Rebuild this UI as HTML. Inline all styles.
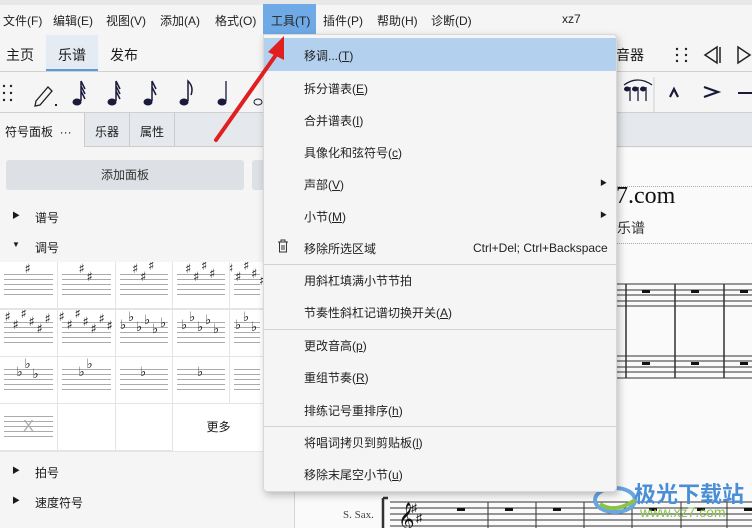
<!DOCTYPE html>
<html><head><meta charset="utf-8"><style>
*{margin:0;padding:0;box-sizing:border-box}
body{width:752px;height:528px;overflow:hidden;background:#f5f5f5;font-family:"Liberation Sans","Noto Sans CJK SC",sans-serif;font-size:12px;color:#1a1a1a;position:relative}
.a{position:absolute;white-space:nowrap}
.mb span{position:absolute;top:12px;font-size:12px;color:#222}
.menu{position:absolute;left:263px;top:34px;width:354px;height:458px;background:#f5f5f5;border:1px solid #d8d8d8;border-radius:0 4px 4px 4px;box-shadow:2px 3px 8px rgba(0,0,0,.25)}
.mi{position:absolute;left:40px;font-size:12px;color:#222}
.sep{position:absolute;left:0;right:0;height:1px;background:#cfd3d8}
u{text-decoration:underline}
.cell{position:absolute;background:#fff}
.stl{position:absolute;left:4px;right:4px;height:1px;background:#aaa}
</style></head><body>
<div class="a" style="left:0;top:0;width:752px;height:5px;background:#e8e8e8"></div>
<div class="mb">
<span style="left:3px">文件(F)</span><span style="left:53px">编辑(E)</span><span style="left:106px">视图(V)</span><span style="left:160px">添加(A)</span><span style="left:215px">格式(O)</span>
<div class="a" style="left:263px;top:4px;width:53px;height:30px;background:#70aae6"></div>
<span style="left:271px">工具(T)</span><span style="left:323px">插件(P)</span><span style="left:377px">帮助(H)</span><span style="left:431px">诊断(D)</span><span style="left:562px">xz7</span>
</div>
<div class="a" style="left:46px;top:35px;width:52px;height:36px;background:#e4ebf3"></div>
<div class="a" style="left:46px;top:69px;width:52px;height:2px;background:#5a9be0"></div>
<div class="a" style="left:6px;top:45px;font-size:14px">主页</div>
<div class="a" style="left:58px;top:45px;font-size:14px">乐谱</div>
<div class="a" style="left:110px;top:45px;font-size:14px">发布</div>
<div class="a" style="left:616px;top:45px;font-size:14px">音器</div>
<div class="a" style="left:0;top:71px;width:752px;height:1px;background:#d0d0d0"></div>
<div class="a" style="left:0;top:112px;width:752px;height:1px;background:#d0d0d0"></div>
<svg class="a" style="left:0;top:35px" width="752" height="80">
<g fill="#222"><circle cx="677" cy="14" r="1.2"/><circle cx="686" cy="14" r="1.2"/><circle cx="677" cy="20" r="1.2"/><circle cx="686" cy="20" r="1.2"/><circle cx="677" cy="26" r="1.2"/><circle cx="686" cy="26" r="1.2"/>
<circle cx="4" cy="51" r="1.2"/><circle cx="11" cy="51" r="1.2"/><circle cx="4" cy="58" r="1.2"/><circle cx="11" cy="58" r="1.2"/><circle cx="4" cy="65" r="1.2"/><circle cx="11" cy="65" r="1.2"/></g>
<path d="M717 12 L705 20 L717 28Z M720 12 V28" fill="none" stroke="#222" stroke-width="1.5"/>
<path d="M738 12 L750 20 L738 28Z" fill="none" stroke="#222" stroke-width="1.5"/>
<path d="M36 66 L48 52 L52 56 L40 70 L35 71Z" fill="none" stroke="#222" stroke-width="1.3"/>
<path d="M55 69 h2 v2 h-2z" fill="#222"/>
<g fill="#1a1a3a" stroke="#1a1a3a">
<ellipse cx="77" cy="67" rx="4" ry="3"/><path d="M81 66 V46 M81 46 l4 8 M81 51 l4 8 M81 56 l4 8" stroke-width="1.5" fill="none"/>
<ellipse cx="112" cy="67" rx="4" ry="3"/><path d="M116 66 V46 M116 46 l4 8 M116 51 l4 8 M116 56 l4 8" stroke-width="1.5" fill="none"/>
<ellipse cx="148" cy="67" rx="4" ry="3"/><path d="M152 66 V46 M152 46 l4 8 M152 52 l4 8" stroke-width="1.5" fill="none"/>
<ellipse cx="184" cy="67" rx="4" ry="3"/><path d="M188 66 V46 q6 6 3 14" stroke-width="1.5" fill="none"/>
<ellipse cx="222" cy="67" rx="4" ry="3"/><path d="M226 66 V46" stroke-width="1.3" fill="none"/>
<ellipse cx="258" cy="67" rx="4" ry="3" fill="none"/>
<path d="M630 66 V52 M638 66 V52 M646 66 V52 M624 50 q14 -10 28 0" stroke-width="1.3" fill="none"/>
<ellipse cx="627" cy="54" rx="2.5" ry="2"/><ellipse cx="635" cy="54" rx="2.5" ry="2"/><ellipse cx="643" cy="54" rx="2.5" ry="2"/>
<path d="M670 62 l4 -8 l4 8" stroke-width="2.2" fill="none"/><path d="M704 52 l14 5 l-14 5" stroke-width="2.2" fill="none"/><path d="M738 58 h14" stroke-width="2"/>
</g>
<path d="M654 42 V77" stroke="#d0d0d0"/>
</svg>
<div class="a" style="left:84px;top:113px;width:668px;height:34px;background:#e5e8ec;border-bottom:1px solid #ccc"></div>
<div class="a" style="left:0;top:113px;width:84px;height:35px;background:#f5f5f5"></div>
<div class="a" style="left:129px;top:113px;width:1px;height:34px;background:#ccc"></div>
<div class="a" style="left:174px;top:113px;width:1px;height:34px;background:#ccc"></div>
<div class="a" style="left:84px;top:113px;width:1px;height:34px;background:#ccc"></div>
<div class="a" style="left:5px;top:123px">符号面板 &nbsp;···</div>
<div class="a" style="left:95px;top:123px">乐器</div>
<div class="a" style="left:140px;top:123px">属性</div>
<div class="a" style="left:6px;top:160px;width:238px;height:30px;background:#dde1e6;border-radius:3px;text-align:center;line-height:30px;color:#333">添加面板</div>
<div class="a" style="left:252px;top:160px;width:20px;height:30px;background:#dde1e6;border-radius:3px"></div>
<div class="a" style="left:12px;top:210px;font-size:8px">▶</div><div class="a" style="left:35px;top:209px">谱号</div>
<div class="a" style="left:12px;top:240px;font-size:8px">▼</div><div class="a" style="left:35px;top:239px">调号</div>
<div class="a" style="left:294px;top:148px;width:1px;height:380px;background:#d5d5d5"></div>
<div class="a" style="left:295px;top:148px;width:457px;height:380px;background:#fafafa"></div>
<div class="a" style="left:0;top:262px;width:264px;height:190px;background:#e4e4e4"></div>
<div id="grid"></div>
<div class="a" style="left:12px;top:465px;font-size:8px">▶</div><div class="a" style="left:35px;top:464px">拍号</div>
<div class="a" style="left:12px;top:495px;font-size:8px">▶</div><div class="a" style="left:35px;top:494px">速度符号</div>
<div class="a" style="left:616px;top:183px;font-family:'Liberation Serif',serif;font-size:24px;color:#111">7.com</div>
<div class="a" style="left:617px;top:218px;font-size:14px;color:#333">乐谱</div>
<div class="a" style="left:600px;top:186px;width:152px;border-top:1px dotted #aaa"></div>
<div class="a" style="left:600px;top:243px;width:152px;border-top:1px dotted #aaa"></div>
<svg class="a" style="left:295px;top:270px" width="457" height="258">
<g stroke="#333" stroke-width="1">
<path d="M300 14H457M300 20H457M300 25H457M300 31H457M300 36H457"/>
<path d="M300 86H457M300 91H457M300 97H457M300 102H457M300 108H457"/>
<path d="M331 14V108M380 14V108M429 14V108" stroke-width="1.5"/>
<path d="M95 232H457M95 238H457M95 244H457M95 250H457M95 256H457"/>
<path d="M193 232V258M241 232V258M289 232V258M337 232V258M386 232V258M432 232V258"/>
<path d="M88 228V258M88 228h5" stroke-width="2.5"/>
</g>
<g fill="#111"><rect x="347" y="20" width="8" height="3"/><rect x="396" y="20" width="8" height="3"/><rect x="445" y="20" width="8" height="3"/>
<rect x="347" y="92" width="8" height="3"/><rect x="396" y="92" width="8" height="3"/><rect x="445" y="92" width="8" height="3"/>
<rect x="162" y="238" width="8" height="3"/><rect x="210" y="238" width="8" height="3"/><rect x="258" y="238" width="8" height="3"/><rect x="306" y="238" width="8" height="3"/><rect x="354" y="238" width="8" height="3"/><rect x="402" y="238" width="8" height="3"/><rect x="449" y="238" width="8" height="3"/></g>
<text x="103" y="258" font-family="DejaVu Sans" font-size="28" fill="#111">𝄞</text>
<text x="116" y="242" font-size="12" fill="#111">♯</text><text x="121" y="252" font-size="12" fill="#111">♯</text>
<text x="48" y="248" font-family="Liberation Serif" font-size="11" fill="#444">S. Sax.</text>
</svg>
<svg class="a" style="left:590px;top:478px" width="50" height="40"><ellipse cx="25" cy="22" rx="20" ry="12" fill="none" stroke="#6aa7e0" stroke-width="4"/><path d="M10 26 q15 10 35 -4" stroke="#8bc34a" stroke-width="4" fill="none"/></svg>
<div class="a" style="left:634px;top:477px;font-size:22px;font-weight:bold;color:#4a8fd6">极光下载站</div>
<div class="a" style="left:640px;top:504px;font-size:14px;color:#8bc34a">www.xz7.com</div>
<div class="menu">
<div class="a" style="left:0;top:3px;width:352px;height:33px;background:#b3d1ef"></div>
<div class="mi" style="top:12px">移调...(<u>T</u>)</div>
<div class="mi" style="top:45px">拆分谱表(<u>E</u>)</div>
<div class="mi" style="top:77px">合并谱表(<u>I</u>)</div>
<div class="mi" style="top:109px">具像化和弦符号(<u>c</u>)</div>
<div class="mi" style="top:141px">声部(<u>V</u>)</div><div class="a" style="left:336px;top:143px;font-size:7px">▶</div>
<div class="mi" style="top:173px">小节(<u>M</u>)</div><div class="a" style="left:336px;top:175px;font-size:7px">▶</div>
<svg class="a" style="left:13px;top:204px" width="12" height="14"><path d="M1 3h10M4 3V1h4v2M2.5 3.5V13h7V3.5M5 6v5M7 6v5" fill="none" stroke="#333"/></svg>
<div class="mi" style="top:205px">移除所选区域</div><div class="a" style="left:209px;top:206px;font-size:12px;color:#222">Ctrl+Del; Ctrl+Backspace</div>
<div class="sep" style="top:229px"></div>
<div class="mi" style="top:237px">用斜杠填满小节节拍</div>
<div class="mi" style="top:269px">节奏性斜杠记谱切换开关(<u>A</u>)</div>
<div class="sep" style="top:294px"></div>
<div class="mi" style="top:302px">更改音高(<u>p</u>)</div>
<div class="mi" style="top:334px">重组节奏(<u>R</u>)</div>
<div class="mi" style="top:367px">排练记号重排序(<u>h</u>)</div>
<div class="sep" style="top:391px"></div>
<div class="mi" style="top:399px">将唱词拷贝到剪贴板(<u>l</u>)</div>
<div class="mi" style="top:431px">移除末尾空小节(<u>u</u>)</div>
</div>
<svg class="a" style="left:0;top:0" width="400" height="200"><path d="M216 140 L278 52" stroke="#e02020" stroke-width="4" stroke-linecap="round"/><path d="M284 36 L268 52 L284 60Z" fill="#e02020"/></svg>
<script>
var g=document.getElementById('grid'),xs=[0,58,116,173,230],ws=[57,57,56,56,34],ys=[262,310,357,404],
cnt=[[1,2,3,4,5],[6,7,6,5,3],[3,2,1,1,0],[0,0,0,0,0]],typ=[["#","#","#","#","#"],["#","#","b","b","b"],["b","b","b","b",""],["","","","",""]];
var h='';for(var r=0;r<4;r++)for(var c=0;c<5;c++){if(r==3&&c>=3)continue;h+='<div class="cell" style="left:'+xs[c]+'px;top:'+ys[r]+'px;width:'+ws[c]+'px;height:46px;overflow:hidden">';
if(!(r==3&&c>0)){for(var i=0;i<5;i++)h+='<div class="stl" style="top:'+(12+i*5)+'px"></div>';
var n=cnt[r][c],t=typ[r][c],w=n*8,x0=(ws[c]-w)/2;
for(var k=0;k<n;k++){var dy=(t=="#"?[0,8,-3,5,12,2,9]:[8,0,10,3,12,6,14])[k];
h+='<div class="a" style="left:'+(x0+k*8)+'px;top:'+(dy)+'px;font-family:DejaVu Sans;font-size:13px;color:#222">'+(t=="#"?"♯":"♭")+'</div>';}
if(r==3&&c==0)h+='<div class="a" style="left:0;width:100%;text-align:center;top:14px;font-size:16px;color:#aaa">X</div>';}
h+='</div>';}
h+='<div class="cell" style="left:173px;top:404px;width:91px;height:47px;text-align:center;line-height:47px">更多</div>';
g.innerHTML=h;
</script>
</body></html>
